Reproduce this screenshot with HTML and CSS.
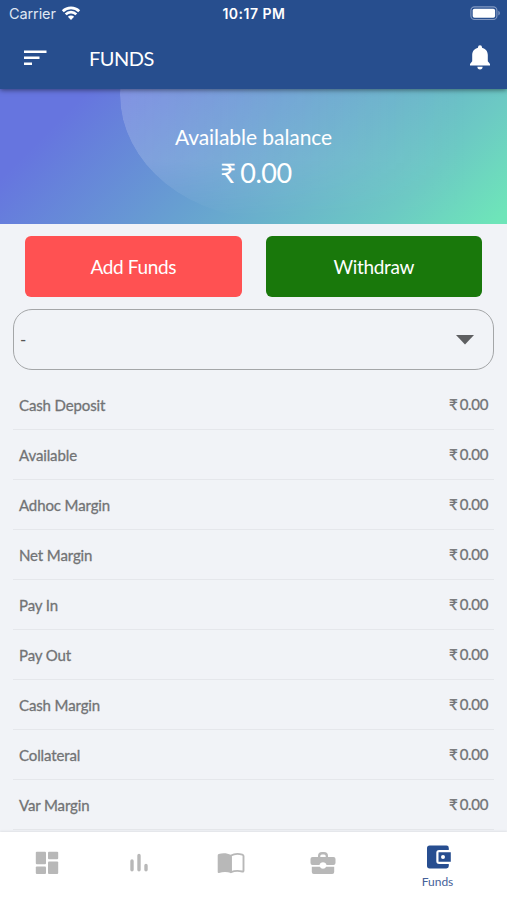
FILE: index.html
```html
<!DOCTYPE html>
<html lang="en">
<head>
<meta charset="utf-8">
<title>Funds</title>
<link rel="stylesheet" href="styles.css">
</head>
<body>
<div class="app">
  <header class="header">
    <div class="status">
      <div class="carrier"><span>Carrier</span>
        <svg width="20" height="16" viewBox="0 0 20 16" fill="none" stroke="#fff" stroke-width="2.7"><path d="M1.800 6.300a11.700 11.700 0 0 1 16.400 0M4.700 9.400a7.500 7.500 0 0 1 10.600 0"/><path d="M6.900 11.800a4.400 4.400 0 0 1 6.200 0L10 15z" fill="#fff" stroke="none"/></svg>
      </div>
      <div class="time">10:17 PM</div>
      <svg class="battery" width="31" height="15" viewBox="0 0 31 15"><rect x=".9" y=".9" width="26" height="12.6" rx="3.6" fill="none" stroke="#8399c2" stroke-width="1.1"/><rect x="2.700" y="2.700" width="22.400" height="9" rx="1.800" fill="#fff"/><path d="M28.400 4.800c2 1 2 3.800 0 4.800z" fill="#8399c2"/></svg>
    </div>
    <div class="toolbar">
      <svg class="menu" width="24" height="16" viewBox="0 0 24 16" fill="#fff"><path d="M0 .5h22.500V3H0zM0 6.500h15.500V9H0zM0 12.500h8V15H0z"/></svg>
      <h1 class="title">FUNDS</h1>
      <svg class="bell" width="20" height="25" viewBox="0 0 20 25" fill="#fff"><path d="M10 .2a2 2 0 0 1 2 2v.6c3.500.8 5.800 3.700 5.800 7.300v6.200L20 19v1.500H0V19l2.200-2.700v-6.200c0-3.600 2.300-6.500 5.800-7.300v-.6a2 2 0 0 1 2-2zM7.400 21.800h5.200a2.600 2.600 0 0 1-5.200 0z"/></svg>
    </div>
  </header>
  <section class="hero">
    <div class="hero-label">Available balance</div>
    <div class="hero-value">₹ 0.00</div>
  </section>
  <main class="content">
    <div class="actions">
      <button class="btn add">Add Funds</button>
      <button class="btn withdraw">Withdraw</button>
    </div>
    <div class="select"><span>-</span><svg width="18" height="10" viewBox="0 0 18 10"><path d="M0 0h18L9 9.500z" fill="#5e5f61"/></svg></div>
    <ul class="list">
      <li><span>Cash Deposit</span><span class="amount">₹ 0.00</span></li>
      <li><span>Available</span><span class="amount">₹ 0.00</span></li>
      <li><span>Adhoc Margin</span><span class="amount">₹ 0.00</span></li>
      <li><span>Net Margin</span><span class="amount">₹ 0.00</span></li>
      <li><span>Pay In</span><span class="amount">₹ 0.00</span></li>
      <li><span>Pay Out</span><span class="amount">₹ 0.00</span></li>
      <li><span>Cash Margin</span><span class="amount">₹ 0.00</span></li>
      <li><span>Collateral</span><span class="amount">₹ 0.00</span></li>
      <li><span>Var Margin</span><span class="amount">₹ 0.00</span></li>
    </ul>
  </main>
  <nav class="nav">
    <a class="tab"><svg width="24" height="24" viewBox="0 0 24 24" fill="#b8b8b8"><rect x=".8" y=".8" width="10.200" height="12.500" rx="1"/><rect x="13" y=".8" width="10.200" height="7.400" rx="1"/><rect x=".8" y="15.500" width="10.200" height="7.400" rx="1"/><rect x="13" y="10.400" width="10.200" height="12.500" rx="1"/></svg></a>
    <a class="tab"><svg width="24" height="24" viewBox="0 0 24 24" fill="none" stroke="#b8b8b8" stroke-width="3.400" stroke-linecap="round"><path d="M5 10v8.800M12 4.500v14.300M19 14.500v4.300"/></svg></a>
    <a class="tab"><svg width="28" height="24" viewBox="0 0 28 24"><path d="M.7 4.500Q.7 3.500 1.700 3.100C5.500 2 10 2 14 4v18c-4-1.300-8-1.300-12 0q-1.300.3-1.300-1z" fill="#b8b8b8"/><path d="M14 4.500c3.500-2 7.500-2 11.300-.9q1.200.4 1.200 1.400v14.500q0 1.300-1.200 1c-3.800-1-7.800-.9-11.300.7z" fill="none" stroke="#b8b8b8" stroke-width="1.900" stroke-linejoin="round"/></svg></a>
    <a class="tab"><svg width="26" height="24" viewBox="0 0 26 24"><path d="M8 6V5a4 4 0 0 1 4-4h2a4 4 0 0 1 4 4v1h5.500a2 2 0 0 1 2 2v4a2 2 0 0 1-2 2h-7a3.600 3.600 0 0 0-7 0h-7a2 2 0 0 1-2-2V8a2 2 0 0 1 2-2zm2.300 0h5.400V5a1.600 1.600 0 0 0-1.600-1.600h-2.200A1.600 1.600 0 0 0 10.300 5zM1.800 15.800h8a3.600 3.600 0 0 0 6.400 0h8V21a2 2 0 0 1-2 2H3.800a2 2 0 0 1-2-2z" fill="#b8b8b8" fill-rule="evenodd"/></svg></a>
    <a class="tab active"><svg width="26" height="24" viewBox="0 0 26 24"><path d="M22.800 5V3a2.400 2.400 0 0 0-2.400-2.400H3.600A2.600 2.600 0 0 0 1 3.200v17.600a2.600 2.600 0 0 0 2.600 2.600h16.800a2.400 2.400 0 0 0 2.400-2.400v-2h-9.600A2.900 2.900 0 0 1 10.300 16V8a2.900 2.900 0 0 1 2.900-3zM12.500 7.300h12.300v9.500H12.500zM17 10a2 2 0 1 0 0 4 2 2 0 0 0 0-4z" fill="#274e90" fill-rule="evenodd"/></svg><span>Funds</span></a>
  </nav>
</div>
</body>
</html>
```

FILE: styles.css
```css
* { box-sizing: border-box; }
body { margin: 0; font-family: Lato, sans-serif; background: #f1f3f7; }
.app { width: 507px; height: 900px; display: flex; flex-direction: column; overflow: hidden; }
.header { height: 89px; flex: none; background: #274e8e; color: #fff; position: relative; z-index: 1; box-shadow: 0 1px 5px rgba(0, 0, 0, .5); }
.status { height: 27px; display: grid; grid-template-columns: 1fr auto 1fr; align-items: center; padding: 0 6px 0 9px; font-family: Inter, sans-serif; font-size: 14.500px; }
.carrier { display: flex; align-items: center; gap: 5px; color: #dfe6f2; letter-spacing: -.1px; }
.carrier svg { margin-top: -2px; }
.time { font-weight: 600; font-size: 14px; letter-spacing: .5px; margin-right: 2px; }
.battery { justify-self: end; }
.toolbar { height: 62px; display: flex; align-items: center; padding: 0 17px 0 24px; }
.menu { margin-top: -1px; }
.title { margin: -1px 0 0 41px; font-size: 20px; font-weight: 400; line-height: 24px; letter-spacing: -.5px; }
.bell { margin-left: auto; margin-top: -1px; }
.hero { height: 134.500px; flex: none; display: flex; flex-direction: column; align-items: center; padding-top: 35px; color: #fff; background: linear-gradient(135deg, #6675df 14%, #67a0d1 47%, #6cc9c4 80%, #6ee5b9 98%); position: relative; overflow: hidden; }
.hero::before { content: ""; position: absolute; left: 120px; top: -111px; width: 387px; height: 242px; border-radius: 155px 0 0 155px / 117px 0 0 125px; background: linear-gradient(90deg, rgba(255, 255, 255, .18), rgba(255, 255, 255, .11) 35%, transparent 90%); -webkit-mask-image: linear-gradient(#000 65%, transparent 98%); mask-image: linear-gradient(#000 75%, transparent 100%); }
.hero-label { position: relative; font-size: 21px; line-height: 26px; letter-spacing: -.06px; }
.hero-value { position: relative; font-size: 27px; line-height: 34px; margin: 6px 0 0 5px; letter-spacing: -.5px; word-spacing: -1.500px; }
.content { flex: 1; min-height: 0; overflow: hidden; padding: 12px 13px 0; }
.actions { display: grid; grid-template-columns: 1fr 1fr; gap: 24px; padding: 0 12px; }
.btn { height: 61px; border: 0; border-radius: 6px; color: #fff; font: 400 19px Lato, sans-serif; letter-spacing: -.35px; padding: 0 0 0; }
.add { background: #ff5152; }
.withdraw { background: #19780b; }
.select { height: 61px; margin-top: 12px; border: 1.400px solid #a4a6a8; border-radius: 19px; display: flex; align-items: center; justify-content: space-between; padding: 0 19px 0 6px; color: #555; font-size: 17px; }
.select svg { margin-top: 2px; }
.list { list-style: none; margin: 10px 0 0; padding: 0; }
.list li { height: 50.100px; display: flex; align-items: center; justify-content: space-between; padding: 1px 6px 0; border-bottom: 1px solid #e5e7eb; color: #727375; font-size: 15px; letter-spacing: -.12px; -webkit-text-stroke: .3px #727375; }
.list .amount { margin-top: -2px; letter-spacing: -.35px; word-spacing: -1px; }
.nav { height: 68px; flex: none; background: #fff; display: grid; grid-template-columns: 93px 92px 92px 92px 138px; padding-top: 12px; box-shadow: 0 -1px 2px rgba(0, 0, 0, .07); }
.tab { display: flex; flex-direction: column; align-items: center; padding-top: 7px; }
.active { padding: 1px 1px 0 0; color: #456199; font-size: 12px; line-height: 15px; gap: 5px; }
.active svg { margin-left: 3px; }
```
